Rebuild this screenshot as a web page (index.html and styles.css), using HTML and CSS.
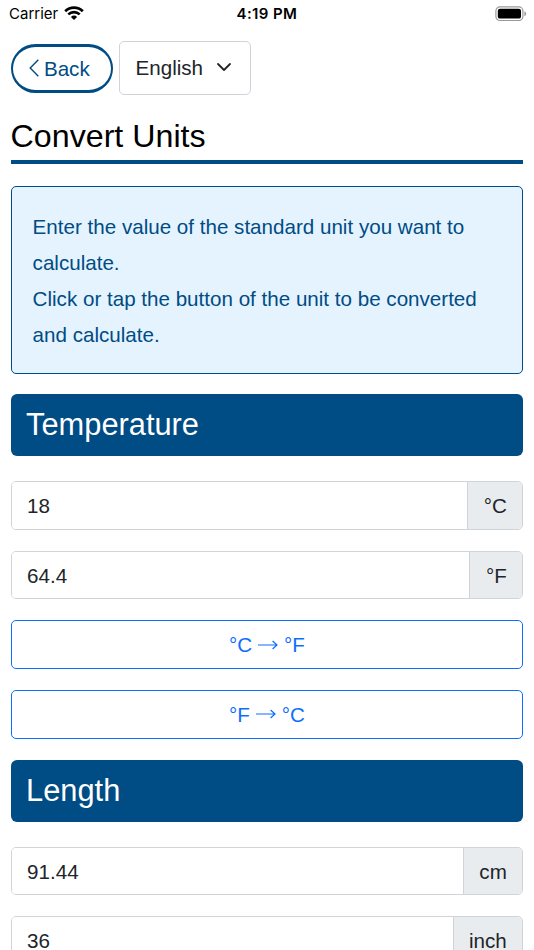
FILE: index.html
```html
<!DOCTYPE html>
<html lang="en">
	<head>
		<meta charset="utf-8">
		<title>Convert Units</title>
		<meta name="viewport" content="width=device-width, initial-scale=1">
		<link rel="stylesheet" href="styles.css">
	</head>
	<body>
		<div class="statusbar">
			<div class="carrier">
				<span>Carrier</span>
				<svg class="wifi" viewBox="0 0 20 14">
					<path d="M1.2 5.2 A12.6 12.6 0 0 1 18.8 5.2" />
					<path d="M4.3 8.4 A8.2 8.2 0 0 1 15.7 8.4" />
					<path class="dot" d="M10 14 L6.9 10.9 A4.4 4.4 0 0 1 13.1 10.9 Z" />
				</svg>
			</div>
			<div class="clock">4:19 PM</div>
			<div class="power">
				<svg class="battery" viewBox="0 0 32 16">
					<rect class="shell" x="0.9" y="0.9" width="27" height="13.6" rx="4" />
					<rect x="2.8" y="2.8" width="23.2" height="9.8" rx="2.2" />
					<path class="cap" d="M29.4 5.2 Q31.2 5.8 31.2 7.7 Q31.2 9.6 29.4 10.2 Z" />
				</svg>
			</div>
		</div>
		<div class="toolbar">
			<a class="back" href="#"><svg viewBox="0 0 12 20"><path d="M10.3 1.8 L2.2 10 L10.3 18.2" /></svg>Back</a>
			<button class="language">English<svg viewBox="0 0 16 16"><path d="M2 5l6 6 6-6" /></svg></button>
		</div>
		<h1>Convert Units</h1>
		<div class="info">
			Enter the value of the standard unit you want to calculate.<br>
			Click or tap the button of the unit to be converted and calculate.
		</div>
		<h2>Temperature</h2>
		<div class="group">
			<input type="text" value="18">
			<span class="unit">°C</span>
		</div>
		<div class="group">
			<input type="text" value="64.4">
			<span class="unit">°F</span>
		</div>
		<button class="convert">°C<svg viewBox="0 0 20 10"><path d="M0 5 H19 M14.6 1 L19 5 L14.6 9" /></svg>°F</button>
		<button class="convert">°F<svg viewBox="0 0 20 10"><path d="M0 5 H19 M14.6 1 L19 5 L14.6 9" /></svg>°C</button>
		<h2>Length</h2>
		<div class="group">
			<input type="text" value="91.44">
			<span class="unit">cm</span>
		</div>
		<div class="group">
			<input type="text" value="36">
			<span class="unit">inch</span>
		</div>
	</body>
</html>
```

FILE: styles.css
```css
* {
	box-sizing: border-box;
}
html {
	height: 100%;
	overflow: hidden;
}
body {
	margin: 0;
	padding: 0 10.7px 0 10.6px;
	height: 100%;
	overflow: hidden;
	background: white;
	color: #212529;
	font: 400 20.6px/1.5 "Liberation Sans", Arial, sans-serif;
}
svg {
	fill: none;
	stroke: currentColor;
	flex: none;
}
.statusbar {
	display: grid;
	grid-template-columns: 1fr auto 1fr;
	align-items: center;
	height: 28px;
	margin: 0 -1.5px;
	color: black;
	font: 400 15px/28px Inter, sans-serif;
}
.carrier {
	display: flex;
	align-items: center;
	gap: 5.5px;
}
.wifi {
	width: 20px;
	height: 14px;
	stroke-width: 2.7px;
	margin-top: -2px;
}
.wifi .dot {
	fill: black;
	stroke: none;
}
.clock {
	font-weight: 600;
	letter-spacing: 0.4px;
}
.power {
	display: flex;
	justify-content: flex-end;
}
.battery {
	width: 32px;
	height: 16px;
	margin-right: -2.4px;
	fill: black;
	stroke: none;
}
.battery .shell {
	fill: none;
	stroke: #999;
	stroke-width: 1.2px;
}
.battery .cap {
	fill: #999;
}
.toolbar {
	display: flex;
	align-items: center;
	gap: 6px;
	height: 54px;
	margin-top: 12.5px;
}
.back {
	display: flex;
	align-items: center;
	justify-content: center;
	gap: 4px;
	width: 102.4px;
	height: 49px;
	margin-top: 1px;
	padding: 2px 6px 0 0;
	border: 2.6px solid #004c84;
	border-width: 3px 2.6px;
	border-radius: 25px;
	color: #004c84;
	text-decoration: none;
}
.back svg {
	width: 12px;
	height: 20px;
	margin-top: -2px;
	stroke-width: 1.4px;
}
.language {
	display: flex;
	align-items: center;
	justify-content: space-between;
	width: 132.4px;
	height: 54px;
	padding: 1px 18px 0 15.5px;
	border: 1.3px solid #ced4da;
	border-radius: 5px;
	background: white;
	color: #212529;
	font: inherit;
}
.language svg {
	width: 16px;
	height: 16px;
	margin-top: -2px;
	stroke-width: 1.8px;
	stroke-linecap: round;
	stroke-linejoin: round;
}
h1 {
	height: 49px;
	margin: 20px 0 22px;
	padding-top: 2px;
	border-bottom: 4px solid #004c84;
	color: black;
	font-size: 32.2px;
	font-weight: 400;
	line-height: 39px;
}
h1 + .info {
	height: 188.5px;
	padding: 22px 21px;
	border: 1.3px solid #004c84;
	border-radius: 5px;
	background: #e5f3ff;
	color: #004c84;
	line-height: 36px;
}
h2 {
	height: 62px;
	margin: 20.1px 0 25.2px;
	padding: 0 15.5px;
	border-radius: 6px;
	background: #004c84;
	color: white;
	font-size: 30.8px;
	font-weight: 400;
	line-height: 62px;
}
.group {
	display: flex;
	height: 48.5px;
	margin-bottom: 21.1px;
	border: 1.3px solid #ced4da;
	border-radius: 5px;
	overflow: hidden;
}
.group input {
	flex: 1;
	min-width: 0;
	padding: 2px 15.5px 0;
	border: none;
	background: white;
	color: #212529;
	font: inherit;
}
.unit {
	padding: 0 15.5px;
	border-left: 1.3px solid #ced4da;
	background: #e9ecef;
	line-height: 47.4px;
}
.convert {
	display: flex;
	align-items: center;
	justify-content: center;
	gap: 6px;
	width: 100%;
	height: 48.5px;
	margin-bottom: 21.1px;
	padding: 2px 0 0;
	border: 1.3px solid #0d6efd;
	border-radius: 5px;
	background: white;
	color: #0d6efd;
	font: inherit;
}
.convert svg {
	width: 20px;
	height: 10px;
	margin-top: -2px;
	stroke-width: 1.2px;
}
```
